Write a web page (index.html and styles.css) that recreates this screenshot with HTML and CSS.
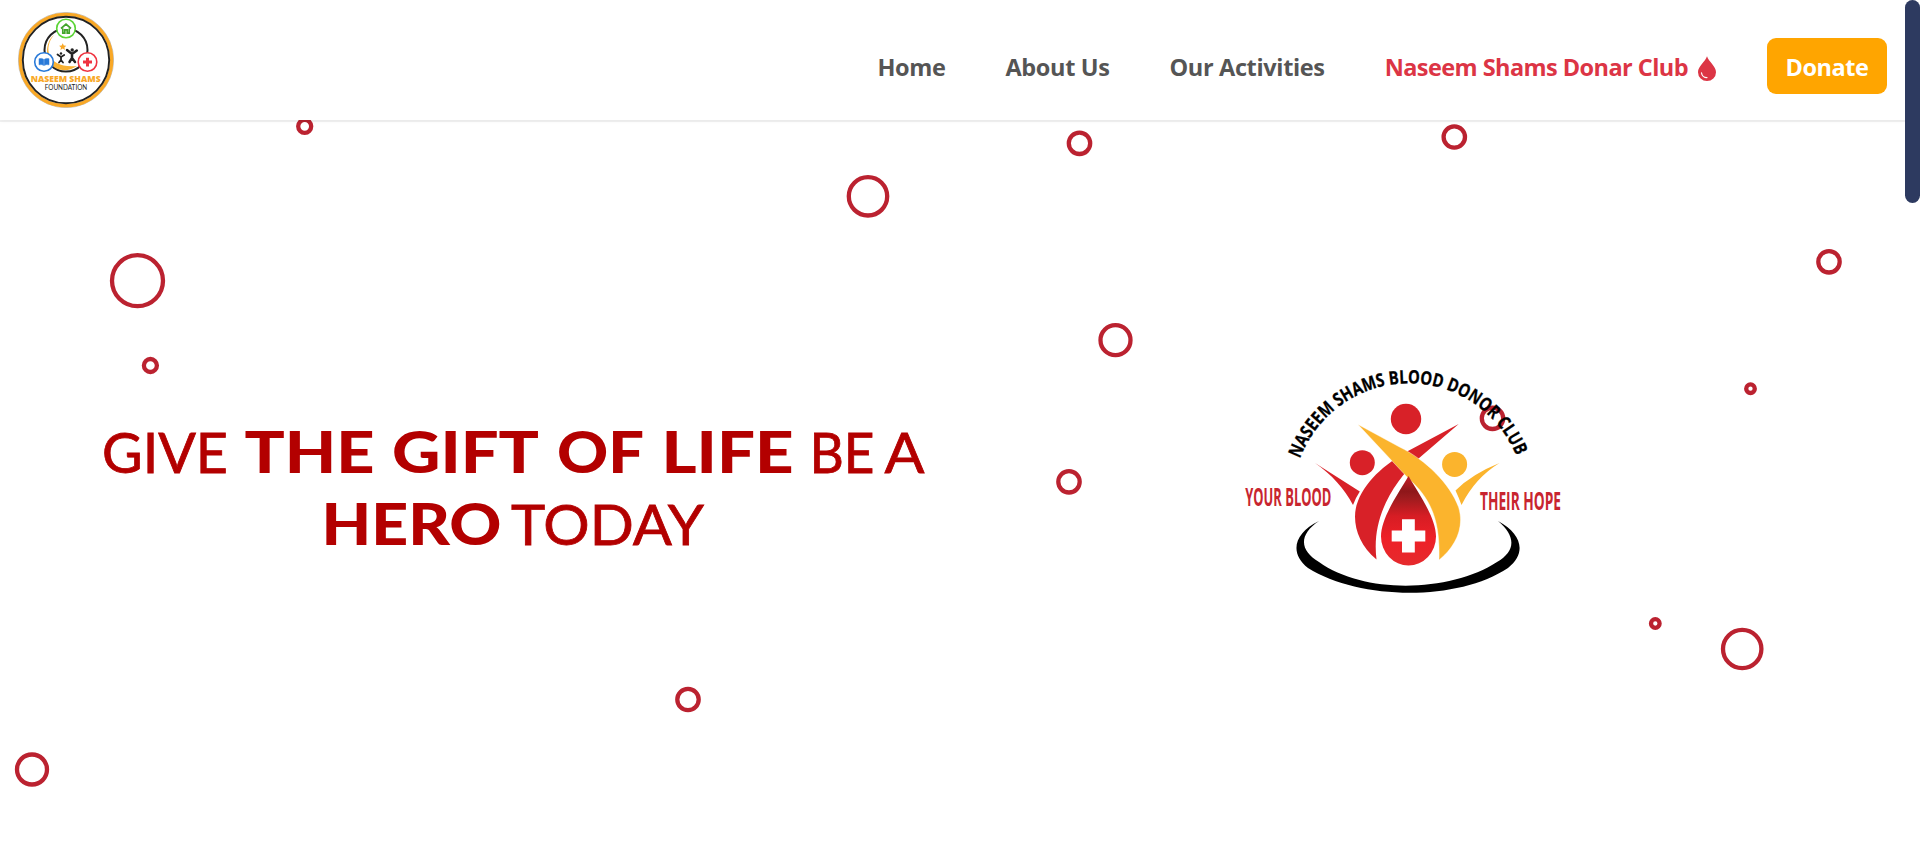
FILE: index.html
```html
<!DOCTYPE html>
<html lang="en">
<head>
<meta charset="utf-8">
<title>Naseem Shams Foundation</title>
<link rel="stylesheet" href="styles.css">
</head>
<body>
<header class="header">
  <a class="brand" href="#" aria-label="Naseem Shams Foundation">
    <svg class="brand-logo" viewBox="18 12 96 96">
      <circle cx="66" cy="60" r="47.6" fill="#fff" stroke="#999" stroke-width=".6"/>
      <circle cx="66" cy="60" r="45.700" fill="#fff" stroke="#f9a826" stroke-width="3.3"/>
      <circle cx="66" cy="60" r="43.200" fill="none" stroke="#222" stroke-width="1.9"/>
      <circle cx="66" cy="50" r="21.5" fill="none" stroke="#222" stroke-width="2"/>
      <path d="M54 35C42 49 49 69 77 66C64 75 47 69 47 52C47 44 50 38 54 35Z" fill="#f9b233"/>
      <path d="M62.7 43.300l1.100 2.200 2.500.2-1.900 1.700.6 2.500-2.300-1.300-2.300 1.300.6-2.500-1.900-1.700 2.500-.2z" fill="#f9a826"/>
      <g fill="#222" stroke="#222" stroke-linecap="round">
        <circle cx="61" cy="53.5" r="1.2" stroke="none"/>
        <path d="M57.5 54.500l3.5 2.500 3.2-2M61 57v3l-2 2.5M61 60l2 2.5" fill="none" stroke-width="1.8"/>
        <circle cx="72.2" cy="50" r="1.7" stroke="none"/>
        <path d="M67 50l5 4 4.8-3.5M72 54v4l-2.5 4M72 58l3 4" fill="none" stroke-width="2.5"/>
      </g>
      <circle cx="66" cy="28.5" r="9.3" fill="#fff" stroke="#5bd435" stroke-width="1.6"/>
      <path d="M61 28.5l5-4.3 5 4.3M62.8 28.500v4.7h2v-3.3h2.4v3.3h2v-4.700" fill="none" stroke="#43a52b" stroke-width="1.7"/>
      <circle cx="44" cy="62" r="9.3" fill="#fff" stroke="#2879d8" stroke-width="1.6"/>
      <path d="M39 58.7q3-.9 4.7.7v6q-2-1.3-4.7-.6zM49 58.7q-3-.9-4.7.7v6q2-1.3 4.7-.6z" fill="#2879d8" stroke="#2879d8" stroke-width=".5"/>
      <circle cx="87.5" cy="62" r="9.3" fill="#fff" stroke="#ef3340" stroke-width="1.6"/>
      <path d="M86 57.8h3v2.8h3v3h-3v2.8h-3v-2.8h-3v-3h3z" fill="#ef3340"/>
      <text class="logo-name" x="30.7" y="82.200" textLength="70" lengthAdjust="spacingAndGlyphs">NASEEM SHAMS</text>
      <text class="logo-sub" x="44.7" y="90" textLength="42.5" lengthAdjust="spacingAndGlyphs">FOUNDATION</text>
    </svg>
  </a>
  <nav class="nav">
    <a class="link" href="#">Home</a>
    <a class="link" href="#">About Us</a>
    <a class="link" href="#">Our Activities</a>
    <a class="link club" href="#">Naseem Shams Donar Club
      <svg class="drop" viewBox="0 0 18 25"><path d="M9 .3C10.6 5.500 18 10.500 18 16.200A9 8.800 0 0 1 0 16.200C0 10.500 7.400 5.500 9 .3Z" fill="#dc3545"/><path d="M3.500 16.800A5.500 5.200 0 0 0 9 21.600" fill="none" stroke="#fff" stroke-width="1.200" stroke-linecap="round"/></svg>
    </a>
    <a class="donate" href="#">Donate</a>
  </nav>
</header>
<main class="hero">
  <svg class="rings" viewBox="0 120 1920 723">
    <g fill="none" stroke="#bb2230" stroke-width="4.300">
      <circle cx="137.500" cy="280.700" r="25.500"/>
      <circle cx="150.400" cy="365.500" r="6.500"/>
      <circle cx="304.700" cy="126.300" r="6.500"/>
      <circle cx="868" cy="196.300" r="19.200"/>
      <circle cx="1079.500" cy="143.300" r="10.700"/>
      <circle cx="1454.300" cy="137" r="10.700"/>
      <circle cx="1829" cy="261.800" r="10.700"/>
      <circle cx="1115.500" cy="340.200" r="15"/>
      <circle cx="1750.500" cy="388.700" r="4.300"/>
      <circle cx="1069" cy="481.800" r="10.700"/>
      <circle cx="1492.500" cy="418.300" r="10.700"/>
      <circle cx="1655.300" cy="623.500" r="4.300"/>
      <circle cx="1742.200" cy="649" r="19.200"/>
      <circle cx="688" cy="699.500" r="10.700"/>
      <circle cx="32" cy="769.500" r="15"/>
    </g>
  </svg>
  <h1 class="headline">
    <svg class="headline-art" viewBox="98 400 834 180">
      <g class="light">
        <text x="102" y="473" textLength="126" lengthAdjust="spacingAndGlyphs">GIVE</text>
        <text x="809.500" y="473" textLength="65" lengthAdjust="spacingAndGlyphs">BE</text>
        <text x="884.500" y="473" textLength="40" lengthAdjust="spacingAndGlyphs">A</text>
        <text x="511" y="545" textLength="193" lengthAdjust="spacingAndGlyphs">TODAY</text>
      </g>
      <g class="heavy">
        <text x="244.500" y="473.400" textLength="130" lengthAdjust="spacingAndGlyphs">THE</text>
        <text x="392" y="473.400" textLength="147" lengthAdjust="spacingAndGlyphs">GIFT</text>
        <text x="557" y="473.400" textLength="87" lengthAdjust="spacingAndGlyphs">OF</text>
        <text x="661.500" y="473.400" textLength="132" lengthAdjust="spacingAndGlyphs">LIFE</text>
        <text x="321.500" y="545.400" textLength="180" lengthAdjust="spacingAndGlyphs">HERO</text>
      </g>
    </svg>
  </h1>
  <svg class="club-logo" viewBox="1230 360 340 250">
    <defs>
      <linearGradient id="blood" x1="0" y1="0" x2="0" y2="1">
        <stop offset="0" stop-color="#c51f27"/><stop offset=".17" stop-color="#8e171a"/><stop offset=".24" stop-color="#9c1b1e"/><stop offset=".45" stop-color="#d71d24"/><stop offset=".7" stop-color="#ee2027"/><stop offset="1" stop-color="#e52a2d"/>
      </linearGradient>
      <path id="arc" d="M1300 458.800A116 116 0 0 1 1517 458"/>
    </defs>
    <text class="arc-text"><textPath href="#arc" textLength="278" lengthAdjust="spacingAndGlyphs">NASEEM SHAMS BLOOD DONOR CLUB</textPath></text>
    <g fill="#d82128">
      <circle cx="1406" cy="419" r="15.200"/>
      <circle cx="1362.300" cy="462.700" r="12.500"/>
      <path d="M1315 463L1359.800 491.500Q1355.500 498 1353 505C1344 488 1332 475 1315 463Z"/>
      <path d="M1458.700 424L1418 459C1395 482 1371 515 1376.500 559.500C1356 543 1351 518 1358 501C1367 478 1390 461 1408 451Z"/>
    </g>
    <g fill="#fbb42d">
      <circle cx="1454.600" cy="464.400" r="12.500"/>
      <path d="M1499.500 463Q1475 478 1461.500 505Q1459 498 1455.500 490.500Q1472 474 1499.500 463Z"/>
      <path d="M1358 424.500L1399.500 447C1426 460 1450 484 1458.500 507C1465 528 1455 547 1439 560C1440 525 1434 501 1408 478Z" stroke="#fff" stroke-width=".4"/>
    </g>
    <path d="M1408.500 476C1400 491 1381 517 1381 536.500A27.500 29 0 0 0 1436 536.500C1436 517 1417 491 1408.500 476Z" fill="url(#blood)"/>
    <path d="M1402 519.300h12.800v11.200h10.500v11h-10.500v11h-12.800v-11h-10.300v-11h10.300z" fill="#fff"/>
    <path d="M1319 521C1298 535 1300 551 1319 562C1365 595 1451 592 1497 562C1516 551 1516 536 1498 521C1522 534 1527 553 1508 568C1457 602 1359 600 1308 568C1289 553 1294 533 1319 521Z"/>
    <text class="motto" x="1245.300" y="505.500" textLength="86" lengthAdjust="spacingAndGlyphs">YOUR BLOOD</text>
    <text class="motto" x="1480" y="509.500" textLength="81" lengthAdjust="spacingAndGlyphs">THEIR HOPE</text>
  </svg>
</main>
<div class="scroll-thumb"></div>
</body>
</html>
```
FILE: styles.css
```css
* { box-sizing: border-box; }
body {
  margin: 0;
  height: 843px;
  overflow: hidden;
  background: #fff;
  font-family: "Open Sans", "Noto Sans", sans-serif;
}
.header {
  position: relative;
  z-index: 2;
  display: flex;
  justify-content: space-between;
  width: 1905px;
  height: 120px;
  padding: 12px 18px;
  background: #fff;
  box-shadow: 0 2px 0 rgba(0, 0, 0, .055), 0 2px 4px rgba(0, 0, 0, .03);
}
.brand-logo { display: block; width: 96px; height: 96px; }
.logo-name { font: 800 8.800px "Open Sans", sans-serif; fill: #f9a826; }
.logo-sub { font: 400 7px Lato, sans-serif; fill: #222; }
.nav {
  display: flex;
  align-items: center;
  gap: 60px;
  height: 110px;
  margin-top: -1px;
  font-size: 23.500px;
  font-weight: 700;
  white-space: nowrap;
}
.nav a { text-decoration: none; }
.link { padding-top: 2px; color: #555; letter-spacing: -.35px; }
.nav .club {
  display: flex;
  align-items: center;
  gap: 10px;
  color: #dc3545;
  letter-spacing: -.56px;
}
.drop { width: 18px; height: 25px; margin-top: 2px; }
.donate {
  display: flex;
  align-items: center;
  justify-content: center;
  width: 120px;
  height: 56px;
  margin-left: -9px;
  padding-top: 2px;
  border-radius: 9px;
  background: #ffa500;
  color: #fff;
  letter-spacing: -.45px;
}
.hero {
  position: relative;
  display: flex;
  align-items: flex-start;
  gap: 298px;
  height: 723px;
  padding: 240px 0 0 98px;
}
.rings {
  position: absolute;
  inset: 0;
  width: 1920px;
  height: 723px;
}
.headline { position: relative; margin: 40px 0 0; }
.headline-art { display: block; width: 834px; height: 180px; fill: #b30000; }
.light { font: 400 57px Lato, sans-serif; stroke: #b30000; stroke-width: .8px; }
.heavy { font: 900 57px Lato, sans-serif; }
.club-logo { position: relative; width: 340px; height: 250px; overflow: visible; }
.arc-text { font: 700 18.500px "Open Sans", sans-serif; stroke: #000; stroke-width: .3px; }
.motto { font: 700 25px "Open Sans", sans-serif; fill: #c8252f; }
.scroll-thumb {
  position: absolute;
  z-index: 3;
  top: 0;
  right: 0;
  width: 15px;
  height: 203px;
  border-radius: 8px;
  background: #2d3a60;
}
```
